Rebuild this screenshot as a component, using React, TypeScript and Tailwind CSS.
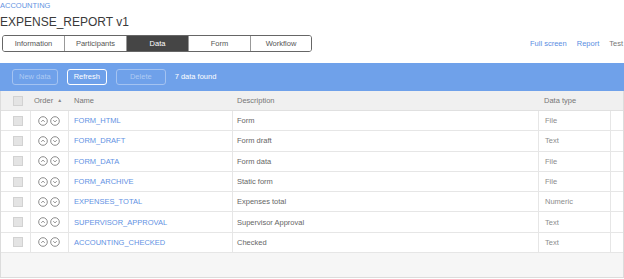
import { ReactNode } from 'react';

type Row = { name: string; desc: string; type: string };

const rows: Row[] = [
  { name: 'FORM_HTML', desc: 'Form', type: 'File' },
  { name: 'FORM_DRAFT', desc: 'Form draft', type: 'Text' },
  { name: 'FORM_DATA', desc: 'Form data', type: 'File' },
  { name: 'FORM_ARCHIVE', desc: 'Static form', type: 'File' },
  { name: 'EXPENSES_TOTAL', desc: 'Expenses total', type: 'Numeric' },
  { name: 'SUPERVISOR_APPROVAL', desc: 'Supervisor Approval', type: 'Text' },
  { name: 'ACCOUNTING_CHECKED', desc: 'Checked', type: 'Text' },
];

const tabs = ['Information', 'Participants', 'Data', 'Form', 'Workflow'];

// кружок со стрелкой (вверх / вниз)
const MoveIcon = ({ down }: { down?: boolean }) => (
  <svg width="10" height="10" viewBox="0 0 10 10" className="block">
    <circle cx="5" cy="5" r="4.3" fill="none" stroke="#808080" strokeWidth="0.9" />
    <path
      d={down ? 'M3.3 4.2 L5 5.9 L6.7 4.2' : 'M3.3 5.8 L5 4.1 L6.7 5.8'}
      fill="none"
      stroke="#808080"
      strokeWidth="0.9"
    />
  </svg>
);

const Checkbox = () => (
  <div className="w-[10px] h-[10px] bg-[#e4e4e4] border border-[#d2d2d2] ml-[12px]" />
);

const ToolButton = ({ children, disabled }: { children: ReactNode; disabled?: boolean }) => (
  <div
    className={`h-[16px] flex items-center rounded-[3px] border bg-transparent leading-none text-[7.5px] ${
      disabled ? 'border-[#a4c3f1] text-[#aecaf3]' : 'border-white text-white'
    }`}
  >
    {children}
  </div>
);

const App = () => {
  return (
    <div className="w-[624px] h-[279px] overflow-hidden bg-white font-['Liberation_Sans',Arial,sans-serif]">
      <div className="h-[11px] flex items-center text-[7.5px] leading-none text-[#6494e2]">ACCOUNTING</div>
      <div className="h-[22px] flex items-center text-[12px] leading-none text-[#3a3a3a]">EXPENSE_REPORT v1</div>

      <div className="mt-[2px] h-[17px] flex items-center justify-between">
        <div className="ml-[2px] flex h-[17px] border border-[#666] rounded-[3px] overflow-hidden">
          {tabs.map((t, i) => (
            <div
              key={t}
              className={`h-full flex items-center justify-center text-[7.5px] leading-none ${
                i === 0 || i === 4 ? 'w-[61px]' : 'w-[62px]'
              } ${i > 0 ? 'border-l border-[#999]' : ''} ${
                t === 'Data' ? 'bg-[#454545] text-white' : 'bg-white text-[#555]'
              }`}
            >
              {t}
            </div>
          ))}
        </div>
        <div className="flex items-center gap-[10px] text-[7.5px] leading-none pr-[1px]">
          <span className="text-[#5a8ee2]">Full screen</span>
          <span className="text-[#5a8ee2]">Report</span>
          <span className="text-[#777]">Test</span>
        </div>
      </div>

      <div className="mt-[11px] h-[28px] bg-[#6fa1ea] flex items-center pl-[12px] gap-[9px]">
        <ToolButton disabled>
          <span className="px-[6px]">New data</span>
        </ToolButton>
        <ToolButton>
          <span className="px-[6px]">Refresh</span>
        </ToolButton>
        <ToolButton disabled>
          <span className="px-[13px]">Delete</span>
        </ToolButton>
        <span className="text-[7.5px] text-white">7 data found</span>
      </div>

      <div className="border-l border-r border-[#dcdcdc]">
        <div className="h-[20px] bg-[#f0f0f0] flex items-center text-[7.5px] text-[#777] border-b border-[#e0e0e0]">
          <div className="w-[30px]">
            <Checkbox />
          </div>
          <div className="w-[38px] pl-[3px] flex items-center">
            Order<span className="ml-[4px] text-[5px] text-[#888]">▲</span>
          </div>
          <div className="w-[164px] pl-[5px]">Name</div>
          <div className="w-[306px] pl-[4px]">Description</div>
          <div className="w-[72px] pl-[5px]">Data type</div>
        </div>

        {rows.map((r) => (
          <div key={r.name} className="h-[20.3px] flex text-[7.5px] border-b border-[#e6e6e6]">
            <div className="w-[30px] flex items-center border-r border-[#e6e6e6]">
              <Checkbox />
            </div>
            <div className="w-[38px] flex items-center gap-[2px] pl-[7px] border-r border-[#e6e6e6]">
              <MoveIcon />
              <MoveIcon down />
            </div>
            <div className="w-[164px] flex items-center pl-[5px] text-[#5f92e3] border-r border-[#e6e6e6]">{r.name}</div>
            <div className="w-[306px] flex items-center pl-[4px] text-[#666] border-r border-[#e6e6e6]">{r.desc}</div>
            <div className="w-[72px] flex items-center pl-[6px] text-[#8c8c8c] border-r border-[#e6e6e6]">{r.type}</div>
          </div>
        ))}

        <div className="h-[25px] bg-[#f6f6f6] border-b border-[#dcdcdc]" />
      </div>
    </div>
  );
};

export default App;
